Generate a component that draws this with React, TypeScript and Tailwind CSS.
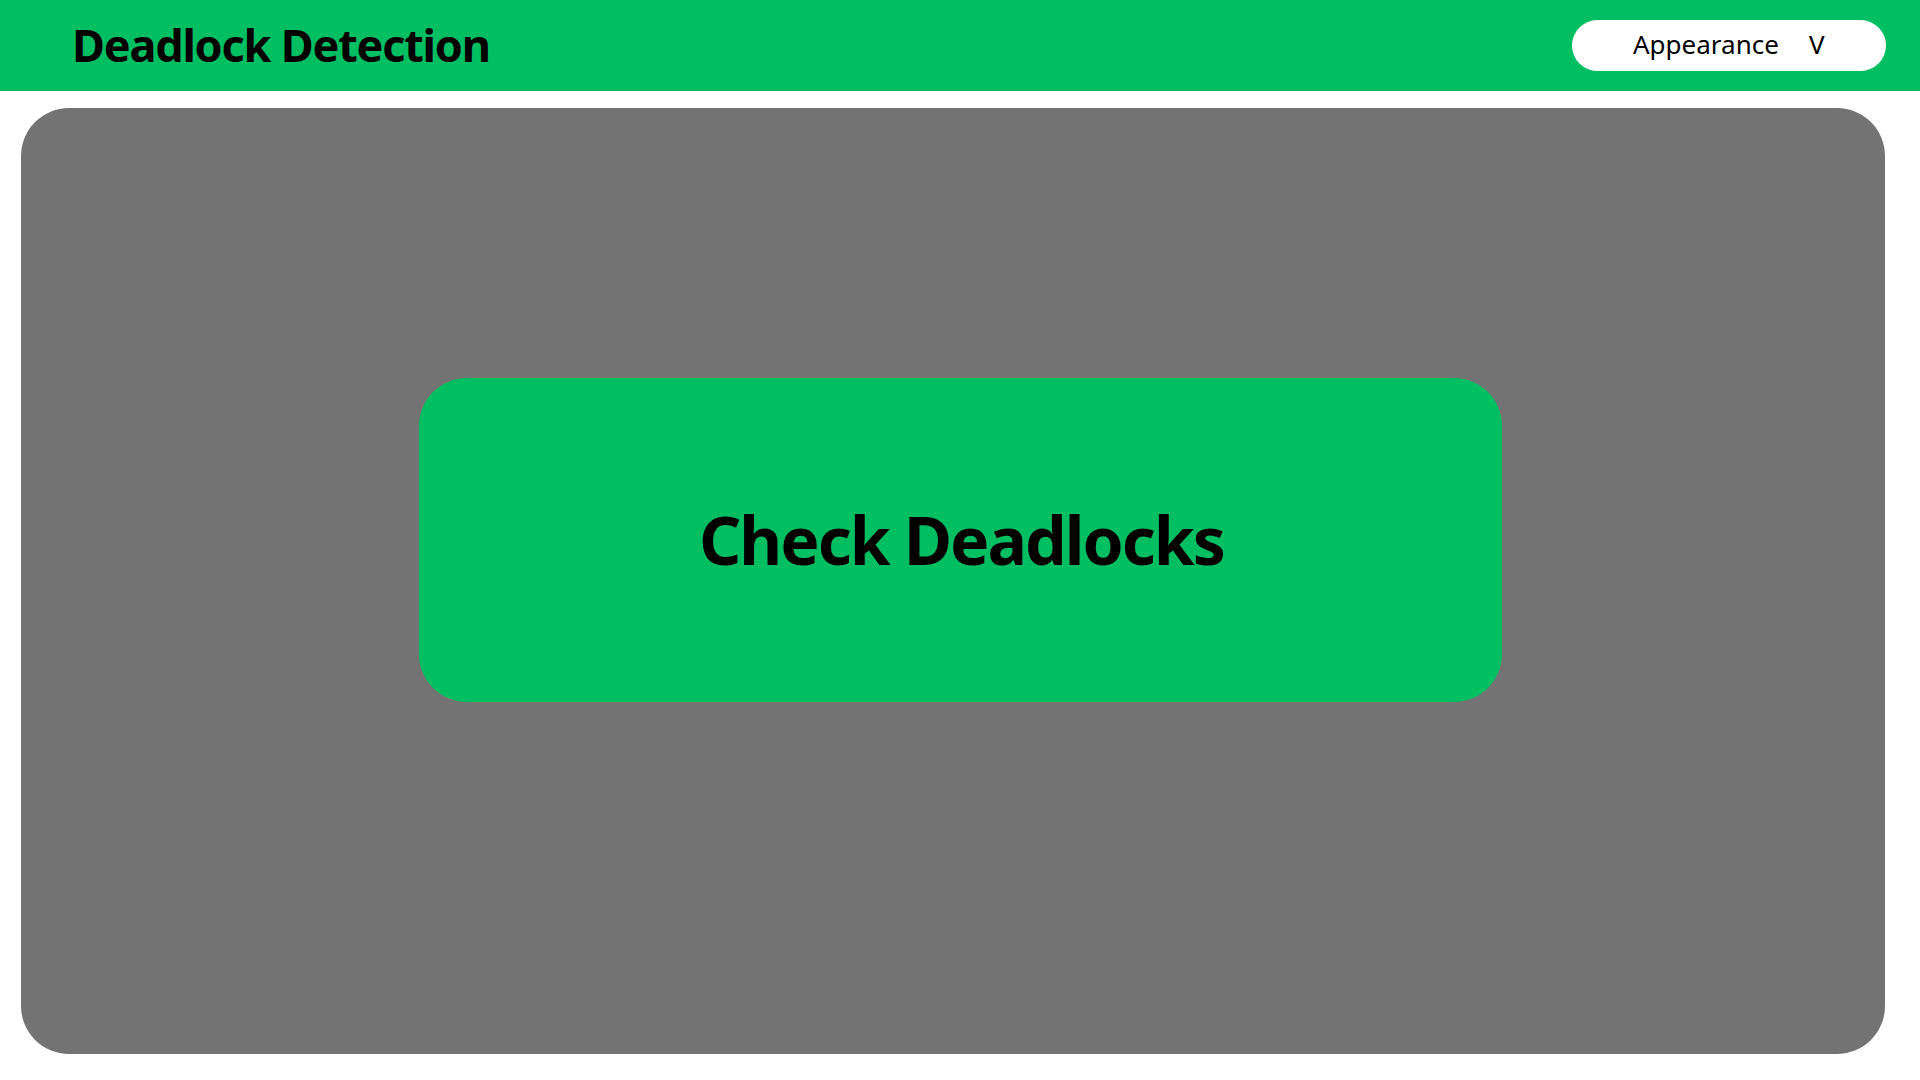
export default function App() {
  return (
    <div className='min-h-screen w-full bg-white' style={{ fontFamily: '"Noto Sans", "Liberation Sans", sans-serif' }}>
      {/* header */}
      <header className='flex h-[91px] w-full items-center justify-between bg-[#00BF63] pl-[72px] pr-[34px]'>
        <h1 className='pb-[2px] text-[45px] font-bold leading-none tracking-[-1.2px] text-black'>Deadlock Detection</h1>
        <button className='flex h-[51px] w-[314px] items-center rounded-full bg-white pb-[3px] pl-[61px] text-[26px] leading-none text-black'>
          <span>Appearance</span>
          <span className='ml-[30px]'>V</span>
        </button>
      </header>

      {/* main panel */}
      <main className='ml-[21px] mt-[17px] flex h-[946px] w-[1864px] items-start rounded-[48px] bg-[#737373] pl-[398px] pt-[270px]'>
        <button className='flex h-[324px] w-[1083px] items-center rounded-[48px] bg-[#00BF63] pb-[3px] pl-[280px]'>
          <span className='text-[66px] font-bold leading-none tracking-[-2px] text-black'>Check Deadlocks</span>
        </button>
      </main>
    </div>
  );
}
